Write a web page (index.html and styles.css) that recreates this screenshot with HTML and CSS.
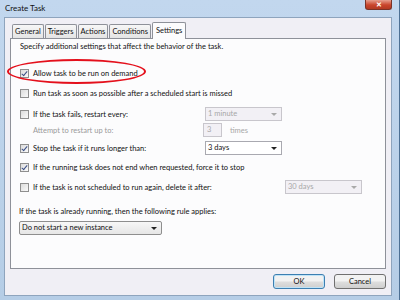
FILE: index.html
```html
<!DOCTYPE html>
<html lang="en">
  <head>
    <meta charset="UTF-8" />
    <title>Create Task</title>
    <link rel="stylesheet" href="styles.css">
  </head>
  <body>
    <div class="window">
      <div class="titlebar">
        <span class="title">Create Task</span>
        <span class="close">&#x2715;</span>
      </div>
      <div class="body">
        <div class="tabs">
          <div class="tab">General</div>
          <div class="tab">Triggers</div>
          <div class="tab">Actions</div>
          <div class="tab">Conditions</div>
          <div class="tab active">Settings</div>
        </div>
        <div class="panel">
          <div class="intro">Specify additional settings that affect the behavior of the task.</div>

          <div class="row r1">
            <span class="check on"></span>
            <span class="label">Allow task to be run on demand</span>
          </div>
          <div class="row r2">
            <span class="check"></span>
            <span class="label">Run task as soon as possible after a scheduled start is missed</span>
          </div>
          <div class="row r3">
            <span class="check"></span>
            <span class="label fixed">If the task fails, restart every:</span>
            <span class="select disabled">1 minute<i class="arrow"></i></span>
          </div>
          <div class="row r4">
            <span class="label fixed sub">Attempt to restart up to:</span>
            <span class="spin">3</span>
            <span class="unit">times</span>
          </div>
          <div class="row r5">
            <span class="check on"></span>
            <span class="label fixed">Stop the task if it runs longer than:</span>
            <span class="select">3 days<i class="arrow"></i></span>
          </div>
          <div class="row r6">
            <span class="check on"></span>
            <span class="label">If the running task does not end when requested, force it to stop</span>
          </div>
          <div class="row r7">
            <span class="check"></span>
            <span class="label fixed wide">If the task is not scheduled to run again, delete it after:</span>
            <span class="select disabled">30 days<i class="arrow"></i></span>
          </div>
          <div class="row r8">
            <span class="label">If the task is already running, then the following rule applies:</span>
          </div>
          <div class="row r9">
            <span class="select long">Do not start a new instance<i class="arrow"></i></span>
          </div>

          <div class="mark"></div>
        </div>
        <div class="footer">
          <span class="button default">OK</span>
          <span class="button">Cancel</span>
        </div>
      </div>
    </div>
  </body>
</html>
```

FILE: styles.css
```css
body {
  margin: 0;
  width: 400px;
  height: 300px;
  overflow: hidden;
  background-color: #6d94b8;
  font-family: Lato, "Open Sans", sans-serif;
  font-size: 7.5px;
  color: #111;
}

.window {
  width: 400px;
  height: 300px;
  box-sizing: border-box;
  background: linear-gradient(#c2d7ee, #b5cde6);
  padding: 0 7px 4px 4px;
  display: flex;
  flex-direction: column;
  border-right: 1px solid #4d7094;
}

.titlebar {
  height: 17px;
  flex: none;
  position: relative;
}

.title {
  position: absolute;
  left: 1px;
  top: 3px;
  font-size: 8px;
  color: #111;
}

.close {
  position: absolute;
  right: 0;
  top: 0;
  width: 25px;
  height: 9px;
  background: linear-gradient(#e7a08f, #c9452c 55%, #b33a22);
  border: 1px solid #7a3328;
  border-top: none;
  border-radius: 0 0 3px 3px;
  color: #fff;
  font-size: 7px;
  line-height: 9px;
  text-align: center;
  font-weight: bold;
}

.body {
  flex: 1;
  background-color: #f0eff5;
  border: 1px solid #8ea4bd;
  padding: 3px 5px 0 5px;
  display: flex;
  flex-direction: column;
}

.tabs {
  display: flex;
  height: 17px;
  align-items: flex-end;
  padding-left: 2px;
  position: relative;
  z-index: 1;
}

.tab {
  height: 14px;
  box-sizing: border-box;
  padding: 0 2px;
  margin-right: 1px;
  border: 1px solid #8e9199;
  border-bottom: none;
  border-radius: 2px 2px 0 0;
  background: linear-gradient(#f7f7f7, #e4e4e4);
  line-height: 13px;
}

.tab.active {
  height: 17px;
  background: #fcfcfd;
  margin-bottom: -1px;
  padding: 0 3px;
  line-height: 16px;
}

.panel {
  position: relative;
  height: 231px;
  box-sizing: border-box;
  background-color: #fcfcfd;
  border: 1px solid #8e9199;
  padding: 1px 0 0 8px;
  display: flex;
  flex-direction: column;
}

.intro {
  height: 14px;
  line-height: 14px;
  padding-left: 1px;
}

.row {
  height: 16px;
  display: flex;
  align-items: center;
}

.r1 { margin-top: 11px; }
.r2 { margin-top: 4px; }
.r3 { margin-top: 5px; }
.r4 { margin-top: 0; }
.r5 { margin-top: 2px; }
.r6 { margin-top: 3px; }
.r7 { margin-top: 4px; }
.r8 { margin-top: 8px; }
.r9 { margin-top: 1px; }

.check {
  width: 7px;
  height: 7px;
  flex: none;
  border: 1px solid #8f8f8f;
  background: linear-gradient(135deg, #dcdcdc, #fafafa);
  margin: 0 4px 0 1px;
  position: relative;
}

.check.on::after {
  content: "";
  position: absolute;
  left: 2px;
  top: 0;
  width: 2px;
  height: 5px;
  border: solid #3b4f86;
  border-width: 0 1.5px 1.5px 0;
  transform: rotate(40deg);
}

.label {
  white-space: nowrap;
}

.label.fixed {
  width: 172px;
  flex: none;
}

.label.wide {
  width: 252px;
}

.label.sub {
  width: 170px;
  padding-left: 14px;
  color: #9a9a9a;
}

.select {
  position: relative;
  width: 77px;
  height: 14px;
  box-sizing: border-box;
  border: 1px solid #a9a9b0;
  background-color: #ffffff;
  padding-left: 2px;
  line-height: 12px;
  flex: none;
}

.select.disabled {
  background-color: #f2f0f5;
  border-color: #c8c6cc;
  color: #a7a7a7;
}

.select.long {
  width: 143px;
  background: linear-gradient(#f7f7f7, #e6e6e6);
  border-color: #8e8e8e;
  border-radius: 2px;
}

.arrow {
  position: absolute;
  right: 4px;
  top: 5px;
  border-left: 3px solid transparent;
  border-right: 3px solid transparent;
  border-top: 3px solid #222;
}

.select.disabled .arrow {
  border-top-color: #a9a9a9;
}

.spin {
  width: 19px;
  height: 14px;
  box-sizing: border-box;
  border: 1px solid #c8c6cc;
  background-color: #f2f0f5;
  color: #a7a7a7;
  padding-left: 3px;
  line-height: 12px;
  flex: none;
}

.unit {
  margin-left: 8px;
  color: #a7a7a7;
}

.mark {
  position: absolute;
  left: -4px;
  top: 20px;
  width: 135px;
  height: 21px;
  border: 2px solid #e4101c;
  border-radius: 50%;
}

.footer {
  display: flex;
  justify-content: flex-end;
  gap: 9px;
  padding: 5px 0 0 0;
}

.button {
  width: 52px;
  height: 15px;
  box-sizing: border-box;
  border: 1px solid #707070;
  border-radius: 3px;
  background: linear-gradient(#f2f2f2 45%, #dddddd 55%, #cfcfcf);
  text-align: center;
  line-height: 13px;
}

.button.default {
  border-color: #3c7fb1;
  box-shadow: inset 0 0 0 1px #bfe3f7;
}
```
